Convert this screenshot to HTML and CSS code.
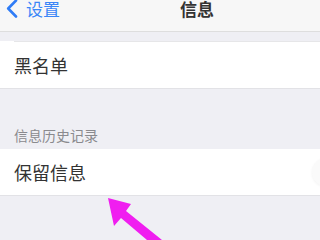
FILE: index.html
```html
<!DOCTYPE html>
<html lang="zh-CN">

<head>
  <meta charset="UTF-8" />
  <title>信息</title>
  <link rel="stylesheet" href="styles.css">
</head>

<body>
  <!-- 导航栏 -->
  <div class="nav">
    <div class="back">
      <svg class="chevron" width="12" height="19" viewBox="0 0 12 19">
        <path d="M10 1.5 L2.2 9.5 L10 17.5" fill="none" stroke="#2f7cf6" stroke-width="2.6" stroke-linecap="round" stroke-linejoin="round" />
      </svg>
      <span>设置</span>
    </div>
    <div class="title">信息</div>
  </div>

  <div class="group">
    <div class="line"></div>
    <div class="row">
      <span>黑名单</span>
    </div>
  </div>

  <div class="section-title">信息历史记录</div>

  <div class="group">
    <div class="row">
      <span>保留信息</span>
      <div class="switch"></div>
    </div>
  </div>

  <!-- 标注箭头 -->
  <svg class="arrow" width="320" height="240" viewBox="0 0 320 240">
    <polygon points="108,198 131,204 126,211 162,240 147,240 121,218 114,226" fill="#f01ef0" />
  </svg>
</body>

</html>
```

FILE: styles.css
```css
body {
  margin: 0;
  padding: 0;
  background-color: #efeff4;
  font-family: "Noto Sans CJK SC", "Noto Sans", sans-serif;
  overflow: hidden;
  height: 240px;
  position: relative;
}

.nav {
  height: 31px;
  display: flex;
  align-items: flex-start;
  background-color: #f7f7f7;
  border-bottom: 1px solid #dedede;
}

.nav .back {
  display: flex;
  align-items: flex-start;
  color: #3a86f7;
  font-size: 17px;
  line-height: 17px;
  padding-left: 6px;
}

.nav .chevron {
  display: block;
  margin-top: -1px;
  margin-right: 8px;
}

.nav .title {
  margin-left: 120px;
  font-size: 17px;
  line-height: 17px;
  color: #333;
  font-weight: bold;
}

.group {
  background-color: #fff;
  border-bottom: 1px solid #e2e2e6;
}

.group .line {
  height: 1px;
  margin-top: 9px;
  margin-left: 14px;
  background-color: #e6e6e8;
}

.row {
  height: 46px;
  display: flex;
  align-items: center;
  justify-content: space-between;
  padding-left: 14px;
  font-size: 18px;
  color: #333;
  overflow: hidden;
}

.section-title {
  height: 60px;
  box-sizing: border-box;
  display: flex;
  align-items: flex-end;
  padding-left: 14px;
  padding-bottom: 6px;
  font-size: 14px;
  line-height: 16px;
  color: #8a8a8e;
}

.switch {
  flex-shrink: 0;
  width: 28px;
  height: 28px;
  border-radius: 50%;
  background-color: #fafafa;
  box-shadow: 0 1px 3px rgba(0, 0, 0, 0.05);
  margin-right: -20px;
}

.arrow {
  position: absolute;
  left: 0;
  top: 0;
}
```
